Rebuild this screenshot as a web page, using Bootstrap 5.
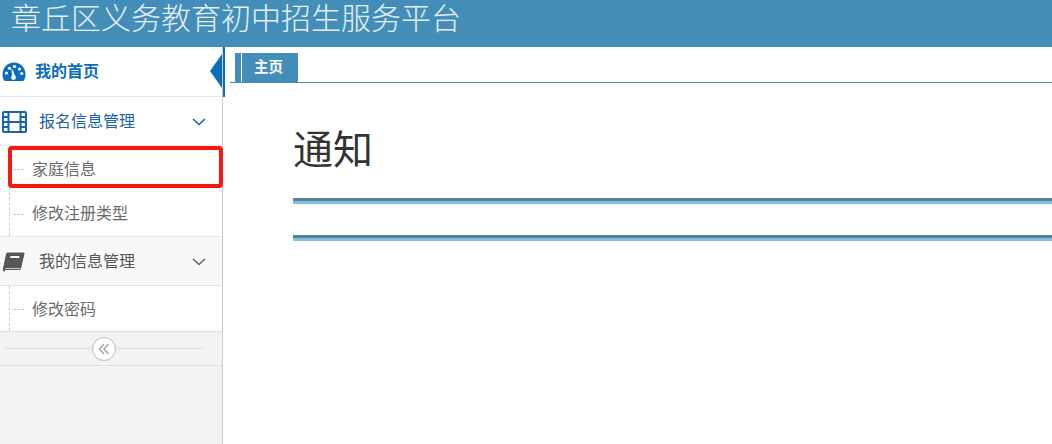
<!DOCTYPE html>
<html lang="zh-CN">
<head>
    <meta charset="UTF-8">
    <meta name="viewport" content="width=device-width, initial-scale=1.0">
    <title>章丘区义务教育初中招生服务平台</title>
    <link href="https://cdn.jsdelivr.net/npm/bootstrap@5.3.0/dist/css/bootstrap.min.css" rel="stylesheet">
    <style>
        html, body { height: 444px; overflow: hidden; }
        body { font-family: "Liberation Sans", "Noto Sans CJK SC", sans-serif; font-size: 16px; color: #393939; background: #fff; }
        .top-bar { height: 47px; background: #438eb9; color: #e6f0f6; font-size: 30px; line-height: 37px; padding-left: 11px; font-weight: 300; }
        .page-wrap { height: 397px; }
        .side-menu { width: 223px; flex: none; background: #f2f2f2; border-right: 1px solid #ccc; position: relative; }
        .menu-row { height: 49px; background: #fff; border-bottom: 1px solid #e5e5e5; color: #585858; position: relative; }
        .menu-home { height: 50px; color: #0b6cbc; font-weight: 700; }
        .menu-home .menu-ic { width: 35px; }
        .menu-open { color: #1963aa; padding-top: 1px; }
        .menu-grey { background: #f8f8f8; border-top: 1px solid #e5e5e5; height: 50px; padding-top: 1px; }
        .menu-ic { width: 39px; flex: none; display: flex; padding-left: 2px; }
        .menu-lbl { flex: 1; }
        .menu-chev { margin-right: 16px; }
        .sub-list { position: relative; background: #fff; margin: 0; padding: 0; list-style: none; }
        .sub-list::before { content: ""; position: absolute; left: 9px; top: 0; bottom: 0; border-left: 1px dashed #b7cfe0; }
        .sub-item { height: 44px; padding-left: 32px; color: #6a6a6a; position: relative; display: flex; align-items: center; border-bottom: 1px dotted #e4e4e4; }
        .sub-item:last-child { border-bottom: 0; }
        .sub-item::before { content: ""; position: absolute; left: 13px; top: 50%; width: 11px; border-top: 1px dashed #bcd0df; }
        .sub-first { height: 46px; padding-top: 2px; }
        .sub-only { height: 45px; padding-top: 2px; }
        .red-mark { position: absolute; left: 8px; top: 99px; width: 215px; height: 42px; border: 4px solid #f7170d; border-radius: 4px; }
        .home-arrow { position: absolute; right: 0; top: 7px; border-style: solid; border-width: 17px 12px 17px 0; border-color: transparent #0b6cbc transparent transparent; }
        .home-edge { position: absolute; left: 223px; top: 0; width: 2px; height: 50px; background: #0b6cbc; }
        .collapse-bar { height: 35px; background: #f3f3f3; border-top: 1px solid #e0e0e0; border-bottom: 1px solid #e0e0e0; position: relative; padding-right: 15px; }
        .collapse-bar::before { content: ""; position: absolute; left: 5px; right: 18px; top: 16px; border-top: 1px solid #e0e0e0; }
        .collapse-btn { width: 24px; height: 24px; border: 1px solid #bbb; border-radius: 50%; background: #fff; position: relative; }
        .main-area { flex: 1; min-width: 0; }
        .tab-strip { height: 36px; margin-left: 7px; padding: 6px 0 0 5px; border-bottom: 1px solid #438eb9; }
        .tab-home { width: 63px; height: 29px; background: #438eb9; color: #fff; font-weight: 700; font-size: 14.500px; position: relative; display: flex; align-items: center; padding-left: 19px; }
        .tab-home::before { content: ""; position: absolute; left: 6px; top: 0; bottom: 0; border-left: 1px solid #fff; }
        .notice-wrap { padding-left: 70px; }
        .notice-title { font-size: 40px; line-height: 1; font-weight: 400; margin: 47px 0 28px; color: #333; }
        .double-rule { height: 6px; border-top: 3px solid #598294; border-bottom: 3px solid #7ac3e6; }
        .gap-rule { margin-top: 31px; }
    </style>
</head>
<body>
    <div class="top-bar">章丘区义务教育初中招生服务平台</div>
    <div class="d-flex page-wrap">
        <div class="side-menu">
            <div class="menu-row menu-home d-flex align-items-center">
                <span class="menu-ic">
                    <svg width="24" height="20" viewBox="0 0 24 20">
                        <path fill="#0b6cbc" d="M12 .5C5.400.5.500 5.700.500 12.500c0 2.300.6 4.300 1.700 6.100.2.300.5.400.8.400h18c.3 0 .6-.1.800-.4 1.100-1.800 1.700-3.800 1.700-6.100C23.500 5.700 18.600.5 12 .5z"/>
                        <g fill="#fff">
                            <circle cx="4.500" cy="11" r="1.600"/><circle cx="7.500" cy="6.300" r="1.600"/><circle cx="12.500" cy="4.500" r="1.600"/><circle cx="17.500" cy="7" r="1.600"/><circle cx="19.700" cy="11.500" r="1.600"/>
                            <circle cx="11.500" cy="15.500" r="2.400"/><path d="M10.300 14.500 9.600 7.500h1.200l2.300 7z"/>
                        </g>
                    </svg>
                </span>
                <span class="menu-lbl">我的首页</span>
                <span class="home-arrow"></span>
            </div>
            <div class="menu-row menu-open d-flex align-items-center">
                <span class="menu-ic">
                    <svg width="25" height="22" viewBox="0 0 25 22">
                        <g fill="none" stroke="#1963aa" stroke-width="2">
                            <rect x="1" y="1" width="23" height="20" rx="1"/>
                            <path d="M6.500 1v20M18.500 1v20M6.500 11h12M1 6h5.500M1 11h5.500M1 16h5.500M18.500 6h5.500M18.500 11h5.500M18.500 16h5.500"/>
                        </g>
                    </svg>
                </span>
                <span class="menu-lbl">报名信息管理</span>
                <svg class="menu-chev" width="14" height="8" viewBox="0 0 14 8"><path d="M1 1l6 5.500L13 1" fill="none" stroke="#1963aa" stroke-width="1.600"/></svg>
            </div>
            <ul class="sub-list">
                <li class="sub-item sub-first">家庭信息</li>
                <li class="sub-item">修改注册类型</li>
            </ul>
            <div class="menu-row menu-grey d-flex align-items-center">
                <span class="menu-ic">
                    <svg width="23" height="20" viewBox="0 0 23 20">
                        <path fill="#585858" d="M6 .5h15.500c.8 0 1.200.6 1 1.300L19 16.500c-.3 1-1 1.500-2 1.500H4.500c-1 0-1.500.6-1.500 1 0 .2-.2.500-.5.500C1 19.500.5 18 1 16L4 2.300C4.300 1.100 5 .5 6 .5z"/>
                        <path fill="#fff" d="M8.500 4h9l-.4 2h-9z"/>
                        <path d="M3 17.500c1-1.300 1.500-1 3-1h12" fill="none" stroke="#fff" stroke-width=".7"/>
                    </svg>
                </span>
                <span class="menu-lbl">我的信息管理</span>
                <svg class="menu-chev" width="14" height="8" viewBox="0 0 14 8"><path d="M1 1l6 5.500L13 1" fill="none" stroke="#666" stroke-width="1.600"/></svg>
            </div>
            <ul class="sub-list">
                <li class="sub-item sub-only">修改密码</li>
            </ul>
            <div class="collapse-bar d-flex justify-content-center align-items-center">
                <span class="collapse-btn d-flex align-items-center justify-content-center">
                    <svg width="12" height="12" viewBox="0 0 12 12"><path d="M6 1 1.500 6 6 11M10.500 1 6 6l4.500 5" fill="none" stroke="#aaa" stroke-width="1.700"/></svg>
                </span>
            </div>
            <div class="red-mark"></div>
            <span class="home-edge"></span>
        </div>
        <div class="main-area">
            <div class="tab-strip">
                <div class="tab-home">主页</div>
            </div>
            <div class="notice-wrap">
                <h1 class="notice-title">通知</h1>
                <div class="double-rule"></div>
                <div class="double-rule gap-rule"></div>
            </div>
        </div>
    </div>
    <script src="https://cdn.jsdelivr.net/npm/bootstrap@5.3.0/dist/js/bootstrap.bundle.min.js"></script>
</body>
</html>
